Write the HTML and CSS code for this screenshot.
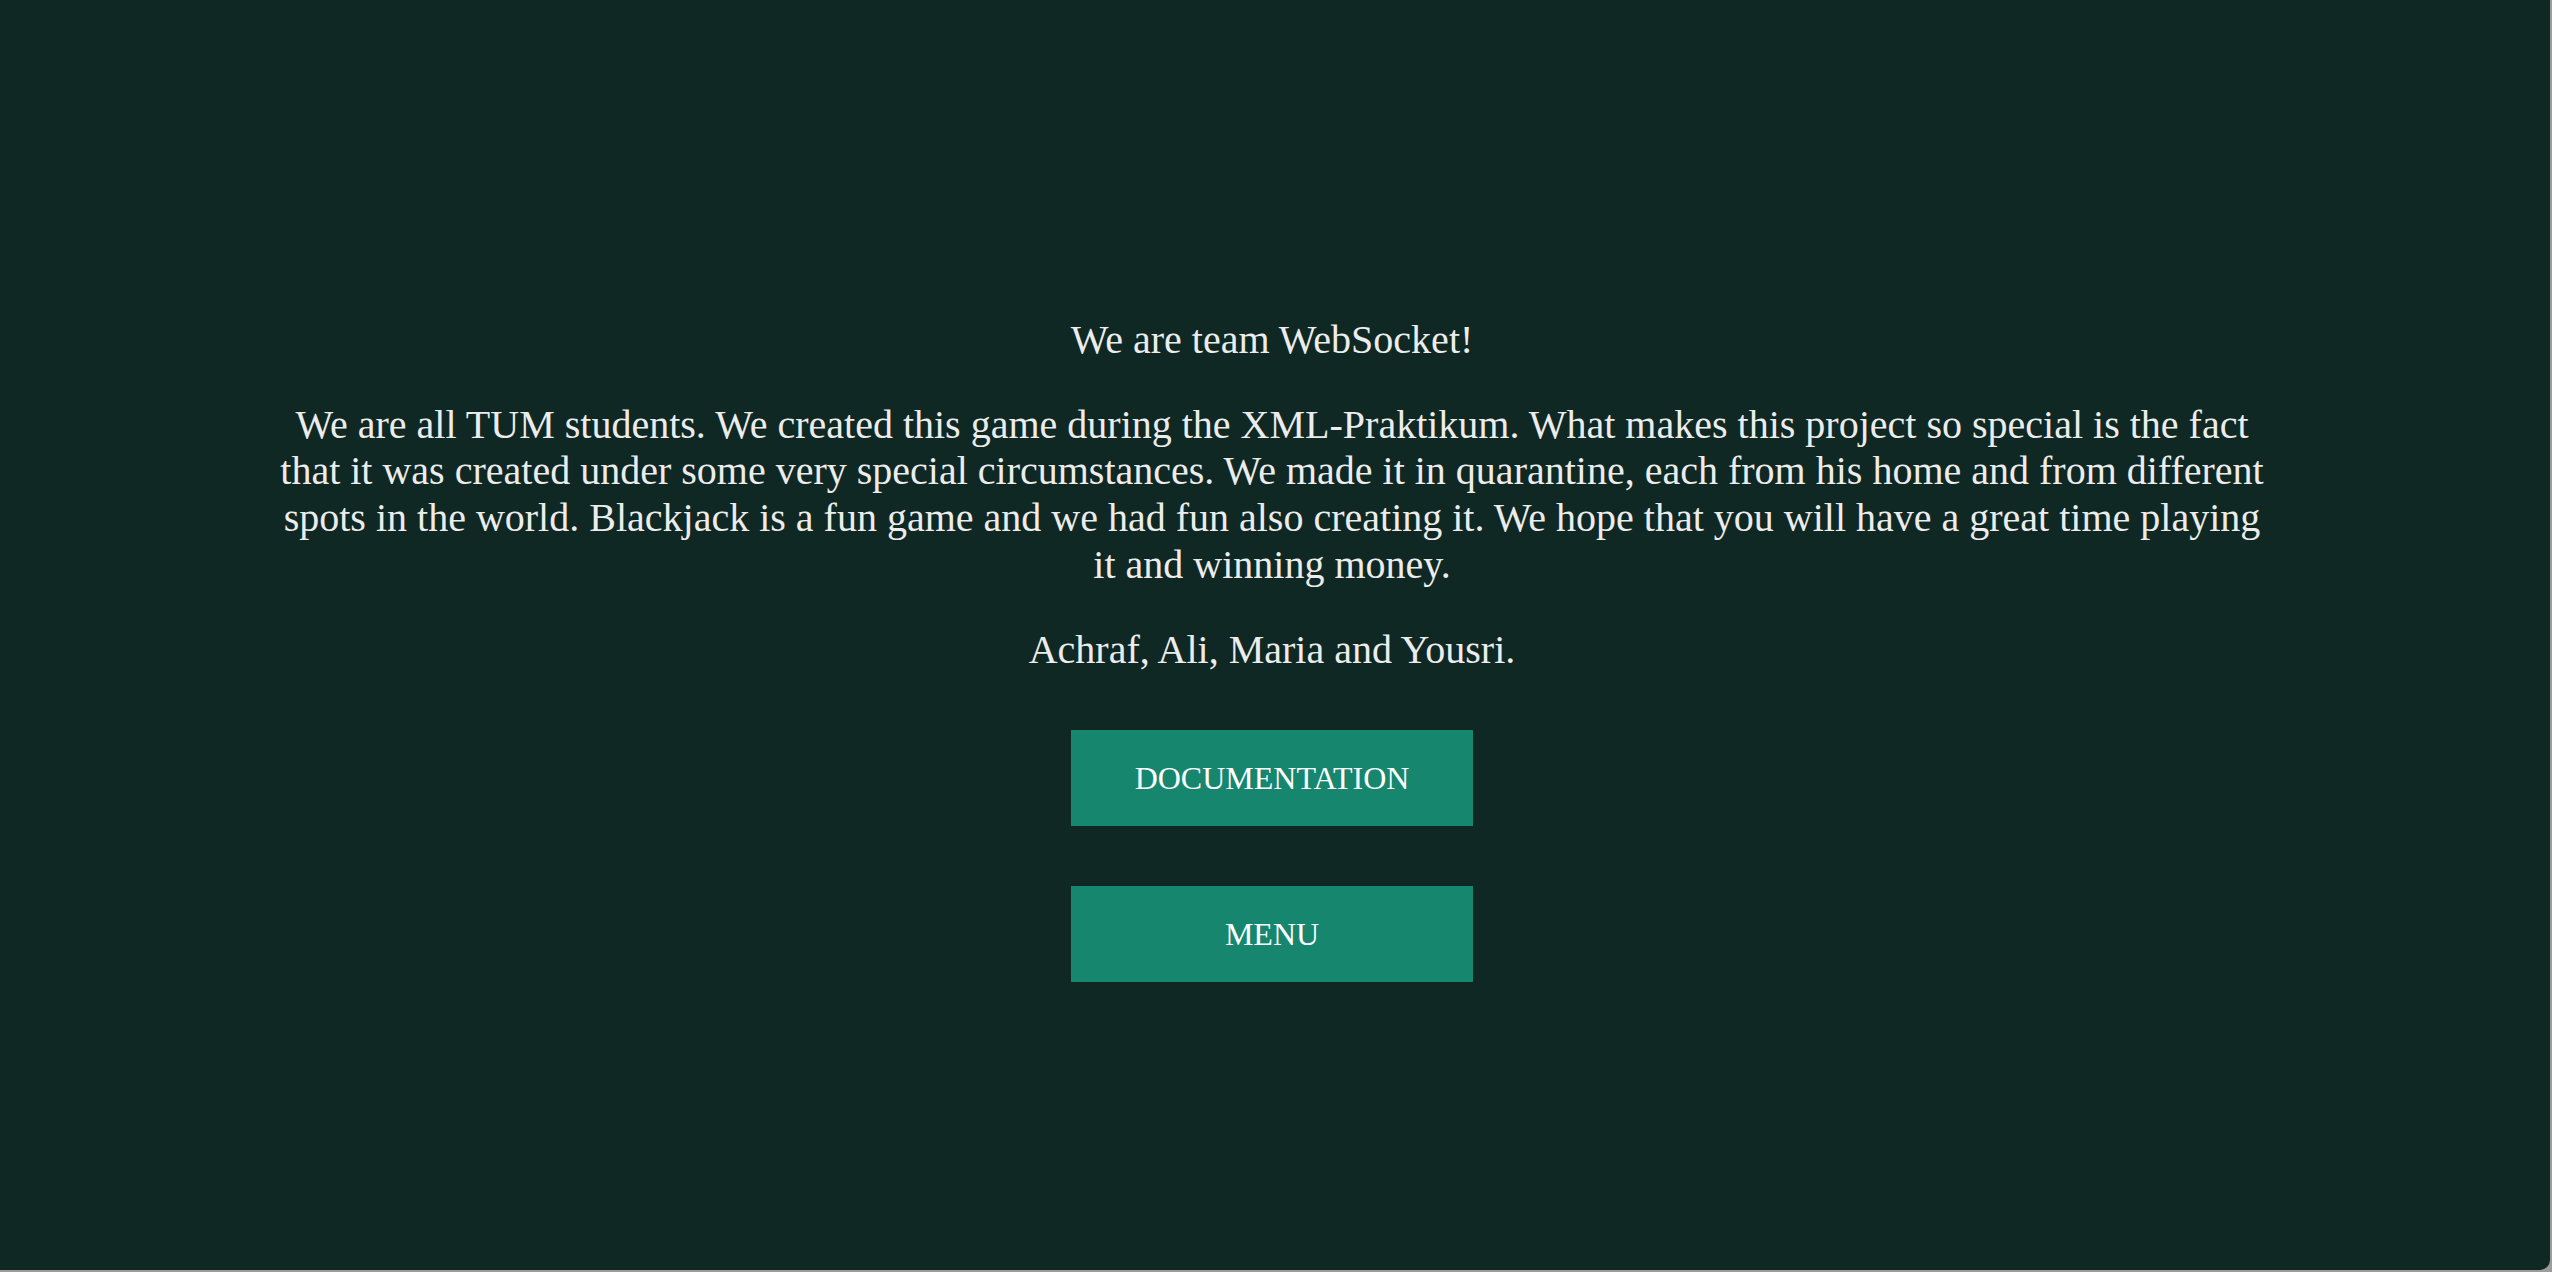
FILE: index.html
```html
<!DOCTYPE html>
<html lang="en">
<head>
<meta charset="utf-8">
<title>About</title>
<link rel="stylesheet" href="styles.css">
</head>
<body>
<div class="window">
  <main class="page">
    <p class="title">We are team WebSocket!</p>
    <p class="text">We are all TUM students. We created this game during the XML-Praktikum. What makes this project so special is the fact that it was created under some very special circumstances. We made it in quarantine, each from his home and from different spots in the world. Blackjack is a fun game and we had fun also creating it. We hope that you will have a great time playing it and winning money.</p>
    <p class="signature">Achraf, Ali, Maria and Yousri.</p>
    <div class="actions">
      <button class="btn" type="button">DOCUMENTATION</button>
      <button class="btn" type="button">MENU</button>
    </div>
  </main>
</div>
</body>
</html>
```
FILE: styles.css
```css
html, body {
  margin: 0;
  padding: 0;
  height: 100%;
  background: #9c9c9c;
}
.window {
  box-sizing: border-box;
  width: calc(100% - 2px);
  height: calc(100% - 2px);
  background: #0f2823;
  border-bottom-right-radius: 10px;
  overflow: hidden;
}
.page {
  display: flex;
  flex-direction: column;
  align-items: center;
  padding-top: 317px;
  padding-right: 6px;
  font-family: "Liberation Serif", "Times New Roman", serif;
  color: #ececec;
  font-size: 40px;
  line-height: 46.7px;
  text-align: center;
}
.page p {
  margin: 0;
}
.title {
  margin-bottom: 38px !important;
}
.text {
  max-width: 2000px;
  margin-bottom: 38px !important;
}
.actions {
  display: flex;
  flex-direction: column;
  align-items: center;
  gap: 60px;
  margin-top: 57px;
}
.btn {
  width: 402px;
  height: 96px;
  border: none;
  background: #16866f;
  color: #ffffff;
  font-family: "Liberation Serif", "Times New Roman", serif;
  font-size: 32px;
  padding: 0;
  cursor: pointer;
}
```
